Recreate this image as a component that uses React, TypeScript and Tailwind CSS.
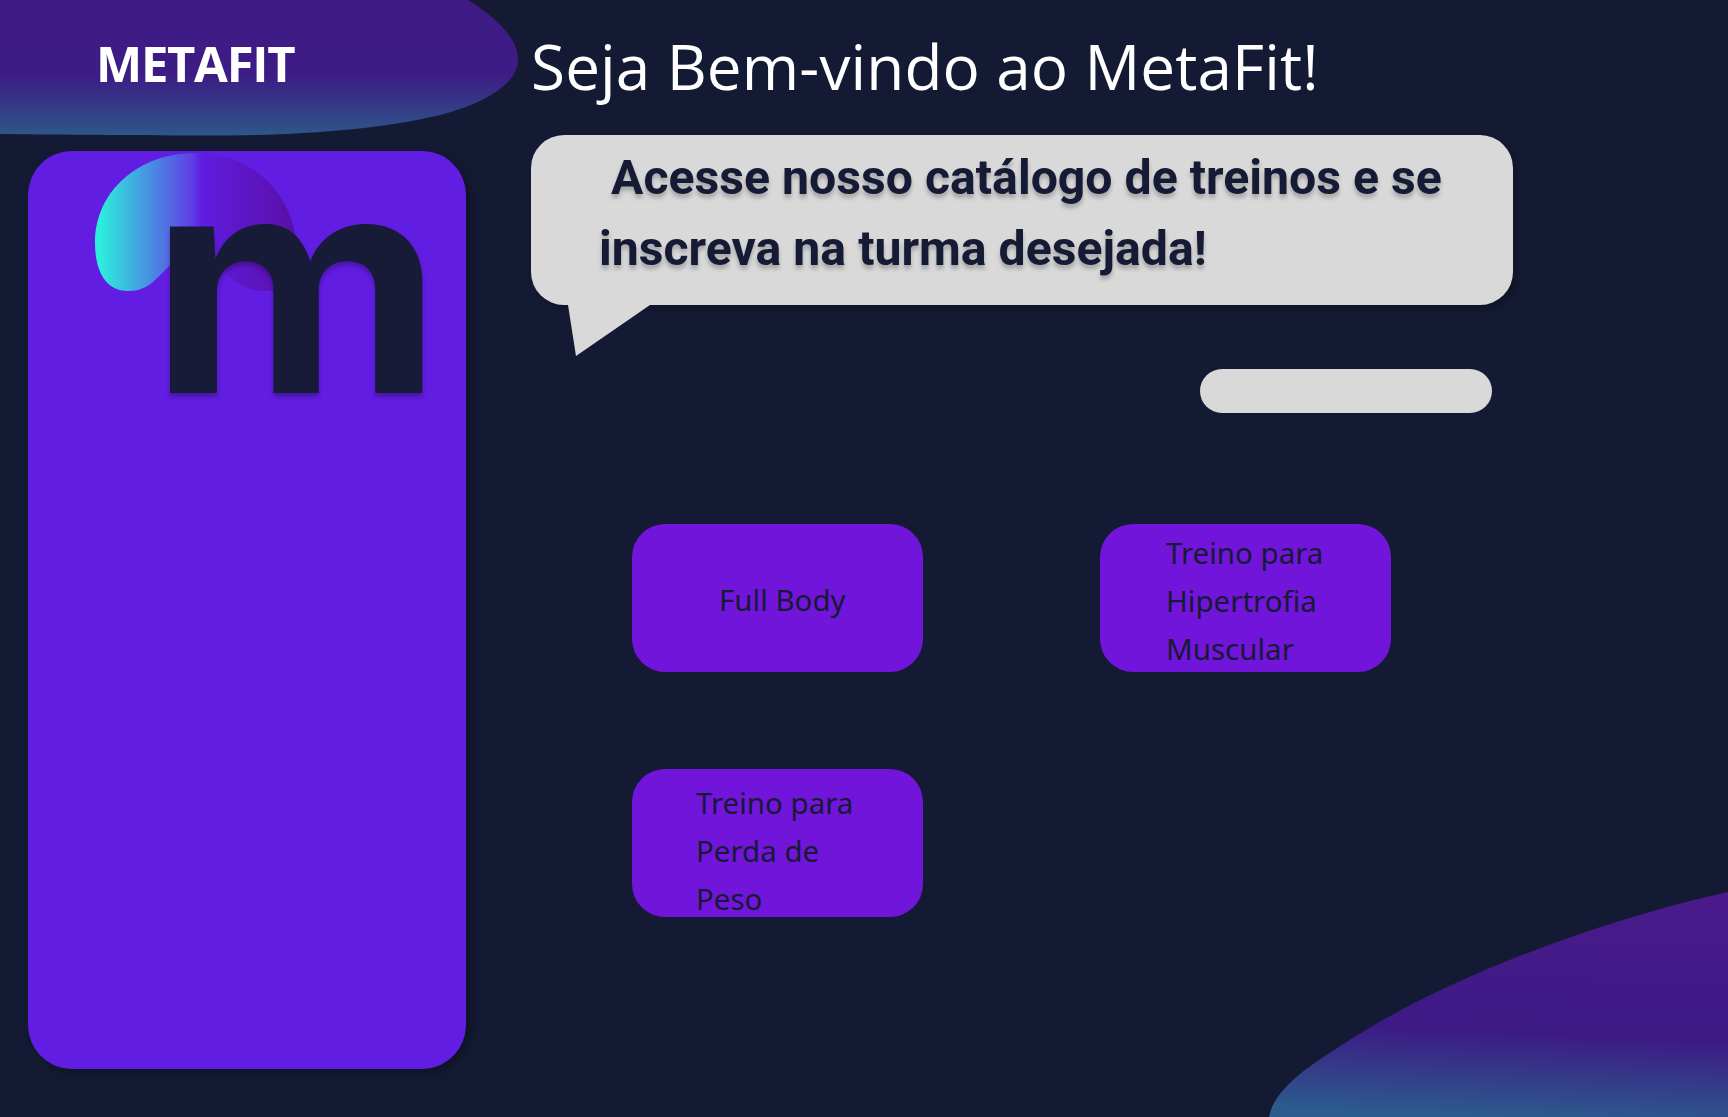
const buttons = [
  { label: ['Full Body'], box: 'pl-[87px] pt-[52px]' },
  { label: ['Treino para', 'Hipertrofia', 'Muscular'], box: 'pl-[66px] pt-[5px]' },
  { label: ['Treino para', 'Perda de', 'Peso'], box: 'pl-[64px] pt-[10px]' },
];

function Blobs() {
  return (
    <svg className="absolute inset-0" width="1728" height="1117" viewBox="0 0 1728 1117" fill="none">
      <defs>
        <linearGradient id="topBlob" gradientUnits="userSpaceOnUse" x1="0" y1="0" x2="0" y2="135">
          <stop offset="0" stopColor="#3f1a85" />
          <stop offset="0.55" stopColor="#3d1c85" />
          <stop offset="1" stopColor="#2d5689" />
        </linearGradient>
        <linearGradient id="bottomBlob" gradientUnits="userSpaceOnUse" x1="1500" y1="892" x2="1490" y2="1117">
          <stop offset="0" stopColor="#4a1a8b" />
          <stop offset="0.62" stopColor="#3d1a85" />
          <stop offset="1" stopColor="#2c5b8d" />
        </linearGradient>
      </defs>
      <path
        d="M0 0 L468 0 C500 20 518 40 518 60 C518 85 480 105 440 115 C370 132 280 136 190 135.5 C110 135 50 135 0 134 Z"
        fill="url(#topBlob)"
      />
      <path d="M1269 1117 C1275 1085 1318 1060 1361 1033 C1440 984 1580 925 1728 892 L1728 1117 Z" fill="url(#bottomBlob)" />
    </svg>
  );
}

function Swoosh() {
  return (
    <svg className="absolute left-[67px] top-[2px]" width="211" height="140" viewBox="95 153 211 140" fill="none">
      <defs>
        <linearGradient id="swoosh" gradientUnits="userSpaceOnUse" x1="100" y1="0" x2="296" y2="0">
          <stop offset="0" stopColor="#2deedc" />
          <stop offset="0.47" stopColor="#5f3ee6" />
          <stop offset="0.52" stopColor="#5f1ce0" />
          <stop offset="1" stopColor="#5a0fa6" />
        </linearGradient>
      </defs>
      <path
        d="M95 243 C95 190 140 153 195 153 C250 153 290 190 296 240 C296 270 290 291 265 291 C245 291 230 280 220 265 L170 265 C155 280 148 291 128 291 C105 291 95 270 95 243 Z"
        fill="url(#swoosh)"
      />
    </svg>
  );
}

export default function App() {
  return (
    <div className="relative h-[1117px] w-[1728px] overflow-hidden bg-[#141a33]">
      <Blobs />
      <div className="relative flex">
        <aside className="ml-[28px] w-[438px] shrink-0">
          <div className="flex h-[151px] items-start pl-[68px] pt-[33px]">
            <h2 className="font-['Open_Sans',sans-serif] text-[49px] font-bold leading-[60px] tracking-[-1.3px] text-white">
              METAFIT
            </h2>
          </div>
          <div className="relative h-[918px] rounded-[44px] bg-[#611de1] shadow-[4px_4px_10px_rgba(0,0,0,0.3)]">
            <Swoosh />
            <span className="absolute left-[122px] top-[12px] origin-left scale-x-[1.05] font-['Inter',sans-serif] text-[305px] font-bold leading-[240px] text-[#171b38] [text-shadow:0_4px_4px_rgba(0,0,0,0.25)]">
              m
            </span>
          </div>
        </aside>

        <main className="ml-[65px] flex w-[982px] flex-col">
          <h1 className="mt-[24px] h-[87px] font-['Open_Sans',sans-serif] text-[62px] leading-[85px] tracking-[0.13px] text-white">
            Seja Bem-vindo ao MetaFit!
          </h1>
          <div className="relative mt-[24px] h-[170px] rounded-[33px] bg-[#d9d9d9] pl-[68px] pt-[7px] shadow-[4px_4px_6px_rgba(0,0,0,0.25)]">
            <p className="font-['Roboto',sans-serif] text-[48.2px] font-bold leading-[71px] text-[#151a35] [text-shadow:0_4px_4px_rgba(0,0,0,0.25)]">
              <span className="pl-[12px]">Acesse nosso catálogo de treinos e se</span>
              <br />
              inscreva na turma desejada!
            </p>
            <svg className="absolute left-[37px] top-[169px]" width="84" height="53" viewBox="0 0 84 53">
              <polygon points="0,1 8,52 82,1" fill="#d9d9d9" />
            </svg>
          </div>
          <div className="ml-[669px] mt-[64px] h-[44px] w-[292px] rounded-[22px] bg-[#d9d9d9]" />
          <div className="ml-[101px] mt-[111px] grid grid-cols-[291px_291px] gap-x-[177px] gap-y-[97px]">
            {buttons.map((b) => (
              <div
                key={b.label[0] + b.label[1]}
                className={`h-[148px] rounded-[33px] bg-[#7215da] font-['Noto_Sans',sans-serif] text-[29.5px] leading-[48px] text-[#151a35] ${b.box}`}
              >
                {b.label.map((line) => (
                  <div key={line}>{line}</div>
                ))}
              </div>
            ))}
          </div>
        </main>
      </div>
    </div>
  );
}
